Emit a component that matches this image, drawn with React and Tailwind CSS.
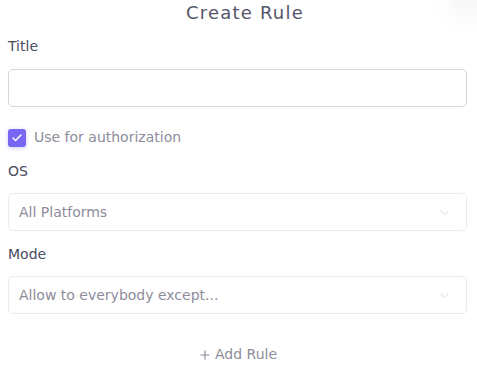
import { ChevronDown, Plus, Check } from 'lucide-react';

function Label({ children }) {
  return <div className="text-[14px] leading-[18px] text-[#4b4a5e]">{children}</div>;
}

function Select({ value }) {
  return (
    <div className="flex h-[38px] items-center justify-between rounded-[5px] border border-[#ececef] bg-white pl-[10px] pr-[14px]">
      <span className="text-[14px] text-[#8d8c9a]">{value}</span>
      <ChevronDown className="h-[15px] w-[15px] text-[#d4d4da]" strokeWidth={1.5} />
    </div>
  );
}

export default function App() {
  return (
    <div
      className="relative h-[378px] w-[477px] overflow-hidden bg-white pl-[8px] pr-[10px]"
      style={{ fontFamily: '"DejaVu Sans", sans-serif' }}
    >
      <div className="absolute right-[-20px] top-[-20px] h-[40px] w-[50px] rounded-full bg-[#000000]/[0.03] blur-[10px]" />

      <h1 className="pl-[15px] pt-[1px] text-center text-[18px] leading-[24px] tracking-[1.2px] text-[#55546b]">Create Rule</h1>

      <div className="mt-[12px]">
        <Label>Title</Label>
        <input
          type="text"
          className="mt-[14px] block h-[38px] w-full rounded-[5px] border border-[#d6d6dc] bg-white px-[10px] text-[14px] outline-none"
        />
      </div>

      <label className="mt-[20px] flex items-center gap-[8px]">
        <span className="flex h-[18px] w-[18px] items-center justify-center rounded-[3px] bg-[#7867f2] shadow-[0_1px_4px_rgba(120,103,242,0.35)]">
          <Check className="h-[12px] w-[12px] text-white" strokeWidth={3} />
        </span>
        <span className="text-[14px] text-[#8d8c9a]">Use for authorization</span>
      </label>

      <div className="mt-[14px]">
        <Label>OS</Label>
        <div className="mt-[13px]">
          <Select value="All Platforms" />
        </div>
      </div>

      <div className="mt-[14px]">
        <Label>Mode</Label>
        <div className="mt-[13px]">
          <Select value="Allow to everybody except..." />
        </div>
      </div>

      <div className="mt-[30px] flex items-center justify-center gap-[3px] text-[14px] text-[#8d8c9a]">
        <Plus className="h-[14px] w-[14px]" strokeWidth={2} />
        <span>Add Rule</span>
      </div>
    </div>
  );
}
